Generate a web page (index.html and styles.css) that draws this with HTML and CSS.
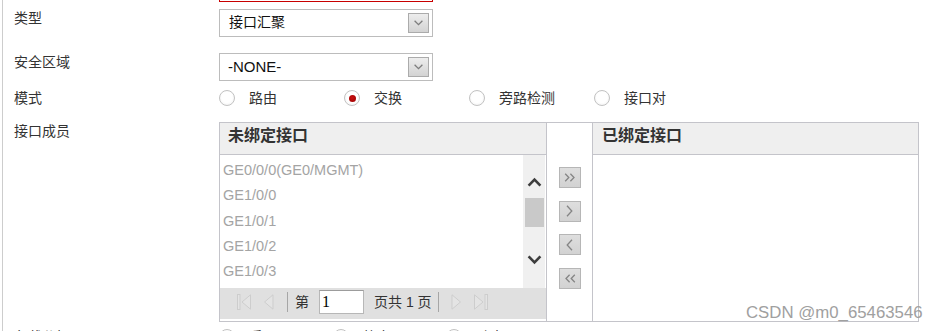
FILE: index.html
```html
<!DOCTYPE html>
<html lang="zh-CN">
<head>
<meta charset="utf-8">
<title>接口配置</title>
<link rel="stylesheet" href="styles.css">
</head>
<body>
<div class="page">
  <div class="form">
    <div class="row row-top">
      <div class="label"></div>
      <div class="input-error"></div>
    </div>

    <div class="row row-type">
      <div class="label">类型</div>
      <div class="select">
        <span class="select-text cjk">接口汇聚</span>
        <span class="select-btn"><svg width="9" height="6" viewBox="0 0 9 6"><polyline points="0.6,0.8 4.5,4.7 8.4,0.8" fill="none" stroke="#7d7d7d" stroke-width="1.3"/></svg></span>
      </div>
    </div>

    <div class="row row-zone">
      <div class="label">安全区域</div>
      <div class="select">
        <span class="select-text">-NONE-</span>
        <span class="select-btn"><svg width="9" height="6" viewBox="0 0 9 6"><polyline points="0.6,0.8 4.5,4.7 8.4,0.8" fill="none" stroke="#7d7d7d" stroke-width="1.3"/></svg></span>
      </div>
    </div>

    <div class="row row-mode">
      <div class="label">模式</div>
      <div class="radio-group">
        <div class="radio"><span class="circle"></span><span>路由</span></div>
        <div class="radio"><span class="circle checked"><span class="dot"></span></span><span>交换</span></div>
        <div class="radio"><span class="circle"></span><span>旁路检测</span></div>
        <div class="radio"><span class="circle"></span><span>接口对</span></div>
      </div>
    </div>

    <div class="row row-members">
      <div class="label">接口成员</div>
      <div class="transfer">
        <div class="panel panel-left">
          <div class="panel-head">未绑定接口</div>
          <div class="list">
            <div class="items">
              <div class="item">GE0/0/0(GE0/MGMT)</div>
              <div class="item">GE1/0/0</div>
              <div class="item">GE1/0/1</div>
              <div class="item">GE1/0/2</div>
              <div class="item">GE1/0/3</div>
            </div>
            <div class="scroll">
              <svg class="scroll-up" width="15" height="10" viewBox="0 0 15 10"><polyline points="1.6,8.6 7.5,2.6 13.4,8.6" fill="none" stroke="#3d3d3d" stroke-width="2.6"/></svg>
              <div class="thumb"></div>
              <svg class="scroll-down" width="15" height="11" viewBox="0 0 15 11"><polyline points="1.6,2.4 7.5,8.4 13.4,2.4" fill="none" stroke="#3d3d3d" stroke-width="2.6"/></svg>
            </div>
          </div>
          <div class="pager">
            <svg class="pg-first" width="15" height="16" viewBox="0 0 15 16"><rect x="0.5" y="0.5" width="2.5" height="15" fill="#e4e4e4" stroke="#cdcdcd"/><polygon points="13.5,0.8 5,8 13.5,15.2" fill="#e4e4e4" stroke="#cdcdcd"/></svg>
            <svg class="pg-prev" width="11" height="16" viewBox="0 0 11 16"><polygon points="10,0.8 1.5,8 10,15.2" fill="#e4e4e4" stroke="#cdcdcd"/></svg>
            <span class="pg-sep"></span>
            <span class="pg-text pg-di">第</span>
            <span class="pg-input">1</span>
            <span class="pg-text pg-total">页共 <b>1</b> 页</span>
            <span class="pg-sep pg-sep2"></span>
            <svg class="pg-next" width="11" height="16" viewBox="0 0 11 16"><polygon points="1,0.8 9.5,8 1,15.2" fill="#e4e4e4" stroke="#cdcdcd"/></svg>
            <svg class="pg-last" width="15" height="16" viewBox="0 0 15 16"><polygon points="1.5,0.8 10,8 1.5,15.2" fill="#e4e4e4" stroke="#cdcdcd"/><rect x="12" y="0.5" width="2.5" height="15" fill="#e4e4e4" stroke="#cdcdcd"/></svg>
          </div>
        </div>
        <div class="panel-mid">
          <span class="mv-btn"><svg width="12" height="9" viewBox="0 0 12 9"><polyline points="1.2,0.8 4.8,4.5 1.2,8.2" fill="none" stroke="#858585" stroke-width="1.3"/><polyline points="6.4,0.8 10,4.5 6.4,8.2" fill="none" stroke="#858585" stroke-width="1.3"/></svg></span>
          <span class="mv-btn"><svg width="7" height="12" viewBox="0 0 7 12"><polyline points="1,0.8 5.8,6 1,11.2" fill="none" stroke="#858585" stroke-width="1.3"/></svg></span>
          <span class="mv-btn"><svg width="7" height="12" viewBox="0 0 7 12"><polyline points="6,0.8 1.2,6 6,11.2" fill="none" stroke="#858585" stroke-width="1.3"/></svg></span>
          <span class="mv-btn"><svg width="12" height="9" viewBox="0 0 12 9"><polyline points="5.6,0.8 2,4.5 5.6,8.2" fill="none" stroke="#858585" stroke-width="1.3"/><polyline points="10.8,0.8 7.2,4.5 10.8,8.2" fill="none" stroke="#858585" stroke-width="1.3"/></svg></span>
        </div>
        <div class="panel panel-right">
          <div class="panel-head panel-head-right">已绑定接口</div>
          <div class="panel-body"></div>
        </div>
      </div>
    </div>

    <div class="row row-next">
      <div class="label">负载分担</div>
      <div class="radio-group">
        <div class="radio radio-sm"><span class="circle"></span><span>手工</span></div>
        <div class="radio radio-sm"><span class="circle"></span><span>静态</span></div>
        <div class="radio radio-sm"><span class="circle"></span><span>动态</span></div>
      </div>
    </div>
  </div>
</div>
<div class="watermark">CSDN @m0_65463546</div>
</body>
</html>
```

FILE: styles.css
```css
html, body {
  margin: 0;
  padding: 0;
  background: #ffffff;
}

body {
  width: 937px;
  height: 331px;
  overflow: hidden;
  position: relative;
  font-family: "Liberation Sans", "Noto Sans CJK SC", sans-serif;
  font-size: 14px;
  color: #333333;
}

.page {
  margin-left: 2px;
  border-left: 1px solid #cdcdcd;
  height: 331px;
  overflow: hidden;
}

.form {
  padding-left: 11px;
}

.row {
  display: flex;
}

.label {
  width: 205px;
  flex: none;
  font-size: 14px;
  line-height: 18px;
  color: #333333;
}

/* top (scrolled away) input with error border */
.row-top {
  margin-top: -26px;
  margin-bottom: 7px;
}

.input-error {
  width: 214px;
  height: 28px;
  box-sizing: border-box;
  border: 1px solid #c80000;
  background: #ffffff;
}

.row-type {
  margin-bottom: 16px;
}

.row-zone {
  margin-bottom: 7px;
}

.select {
  width: 214px;
  height: 28px;
  box-sizing: border-box;
  border: 1px solid #bcbcbc;
  background: #ffffff;
  display: flex;
  align-items: center;
  justify-content: space-between;
  padding: 0 3px 0 8px;
}

.select-text {
  font-size: 15px;
  color: #111111;
  line-height: 18px;
}

.select-text.cjk {
  font-size: 14px;
  padding-left: 1px;
  padding-bottom: 3px;
}

.select-btn {
  width: 21px;
  height: 20px;
  box-sizing: border-box;
  border: 1px solid #ababab;
  background: linear-gradient(#ededed, #d3d3d3);
  display: flex;
  align-items: center;
  justify-content: center;
}

/* radios */
.row-mode {
  height: 20px;
  align-items: center;
  margin-bottom: 14px;
}

.radio-group {
  display: flex;
  align-items: center;
}

.radio {
  width: 125px;
  display: flex;
  align-items: center;
  gap: 14px;
  font-size: 14px;
  line-height: 18px;
  color: #333333;
}

.radio-sm {
  width: 113.5px;
}

.circle {
  width: 16px;
  height: 16px;
  box-sizing: border-box;
  border-radius: 50%;
  border: 1px solid #c2c2c2;
  background: radial-gradient(circle at 50% 45%, #ffffff 50%, #ececec 100%);
  display: flex;
  align-items: center;
  justify-content: center;
  flex: none;
}

.dot {
  width: 7px;
  height: 7px;
  border-radius: 50%;
  background: radial-gradient(circle at 45% 40%, #c81010, #9a0000);
}

/* transfer */
.row-members {
  margin-bottom: 5px;
}

.transfer {
  display: flex;
  width: 700px;
  height: 200px;
  box-sizing: border-box;
  border: 1px solid #c4c4ca;
}

.panel {
  display: flex;
  flex-direction: column;
}

.panel-left {
  width: 326px;
}

.panel-right {
  flex: 1;
}

.panel-head {
  height: 31px;
  box-sizing: content-box;
  border-bottom: 1px solid #c4c4ca;
  background: #efefef;
  font-size: 16px;
  font-weight: bold;
  line-height: 25px;
  padding-left: 8px;
  color: #333333;
  flex: none;
}

.panel-head-right {
  padding-left: 9px;
}

.panel-body {
  flex: 1;
  background: #ffffff;
}

.list {
  height: 133px;
  display: flex;
  flex: none;
}

.items {
  flex: 1;
  padding-top: 3px;
}

.item {
  height: 25.3px;
  line-height: 25.3px;
  padding-left: 3px;
  font-size: 14.5px;
  color: #a4a4a4;
  white-space: nowrap;
}

.scroll {
  width: 22px;
  margin-right: 1px;
  background: #f0f0f0;
  display: flex;
  flex-direction: column;
  align-items: center;
  padding-top: 22px;
  box-sizing: border-box;
}

.thumb {
  width: 19px;
  height: 29px;
  margin-top: 11px;
  background: #c9c9c9;
}

.scroll-down {
  margin-top: 27px;
}

.pager {
  height: 31px;
  box-sizing: border-box;
  padding: 0 0 4px 17px;
  background: #e0e0e0;
  margin-bottom: 2px;
  display: flex;
  align-items: center;
  flex: none;
}

.pg-prev {
  margin-left: 11px;
}

.pg-sep {
  width: 1px;
  height: 20px;
  background: #a6a6a6;
  margin-left: 13px;
}

.pg-text {
  font-size: 14px;
  line-height: 18px;
  color: #333333;
}

.pg-text b {
  font-weight: normal;
}

.pg-di {
  margin-left: 7px;
}

.pg-input {
  width: 45px;
  height: 24px;
  box-sizing: border-box;
  margin-left: 10px;
  border: 1px solid #b7b7b7;
  border-top-color: #9c9c9c;
  background: #ffffff;
  font-family: "Liberation Serif", serif;
  font-size: 16px;
  line-height: 22px;
  padding-left: 2px;
  color: #000000;
}

.pg-total {
  margin-left: 10px;
}

.pg-sep2 {
  margin-left: 6px;
}

.pg-next {
  margin-left: 12px;
}

.pg-last {
  margin-left: 11px;
}

.panel-mid {
  width: 45px;
  flex: none;
  border-left: 1px solid #c4c4ca;
  border-right: 1px solid #c4c4ca;
  background: #ffffff;
  display: flex;
  flex-direction: column;
  align-items: center;
  padding-top: 44px;
  gap: 12.5px;
}

.mv-btn {
  width: 22px;
  height: 21px;
  box-sizing: border-box;
  border: 1px solid #b6b6b6;
  background: linear-gradient(#dedede, #d2d2d2);
  display: flex;
  align-items: center;
  justify-content: center;
}

.row-next {
  height: 20px;
  align-items: center;
}

.watermark {
  position: absolute;
  left: 746px;
  top: 304px;
  font-family: "Liberation Sans", sans-serif;
  font-size: 16.8px;
  line-height: 17px;
  color: #a0a0a0;
  white-space: nowrap;
}
```
